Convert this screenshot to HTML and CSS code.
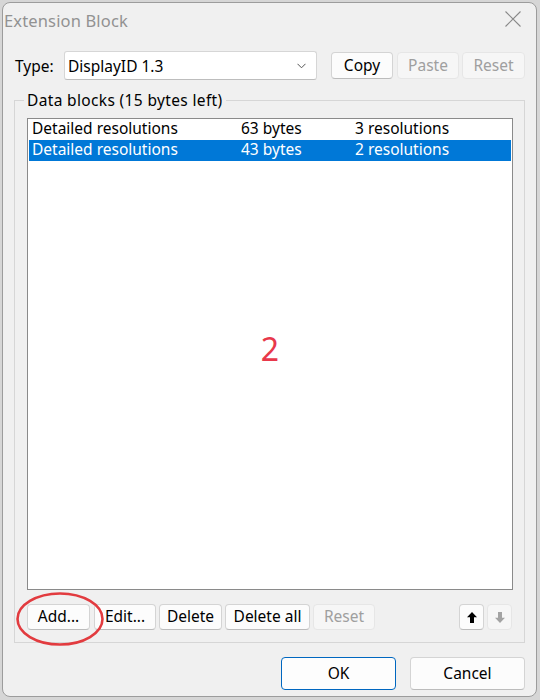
FILE: index.html
```html
<!DOCTYPE html>
<html lang="en">
<head>
<meta charset="utf-8">
<title>Extension Block</title>
<link rel="stylesheet" href="styles.css">
</head>
<body>
<div class="dialog">
  <div class="titlebar">
    <span class="title">Extension Block</span>
    <svg class="close" width="16" height="16" viewBox="0 0 16 16" aria-hidden="true">
      <path d="M0.5 0.5 L15.5 15.5 M15.5 0.5 L0.5 15.5" stroke="#8a8a8a" stroke-width="1.1" fill="none"/>
    </svg>
  </div>
  <div class="body">
    <div class="type-row">
      <span class="type-label">Type:</span>
      <div class="combo">
        <span class="combo-text">DisplayID 1.3</span>
        <svg class="chevron" width="9" height="6" viewBox="0 0 9 6" aria-hidden="true">
          <path d="M0.5 0.8 L4.5 4.8 L8.5 0.8" stroke="#555" stroke-width="1" fill="none"/>
        </svg>
      </div>
      <button class="btn copy">Copy</button>
      <button class="btn paste disabled">Paste</button>
      <button class="btn reset-top disabled">Reset</button>
    </div>

    <fieldset class="group">
      <legend>Data blocks (15 bytes left)</legend>
      <div class="list">
        <div class="row"><span class="c1">Detailed resolutions</span><span class="c2">63 bytes</span><span class="c3">3 resolutions</span></div>
        <div class="row selected"><span class="c1">Detailed resolutions</span><span class="c2">43 bytes</span><span class="c3">2 resolutions</span></div>
        <div class="marker">2</div>
      </div>
      <div class="actions">
        <div class="add-wrap">
          <button class="btn add">Add...</button>
          <svg class="ring" width="88" height="54" viewBox="0 0 88 54" aria-hidden="true">
            <ellipse cx="44" cy="27" rx="42.5" ry="25.5" fill="none" stroke="#e23b3f" stroke-width="2.6"/>
          </svg>
        </div>
        <button class="btn edit">Edit...</button>
        <button class="btn del">Delete</button>
        <button class="btn delall">Delete all</button>
        <button class="btn reset-bottom disabled">Reset</button>
        <div class="arrows">
          <button class="btn arrow">
            <svg width="10" height="11" viewBox="0 0 10 11" aria-hidden="true"><path d="M5 0 L10 5.2 H7 V11 H3 V5.2 H0 Z" fill="#000"/></svg>
          </button>
          <button class="btn arrow disabled">
            <svg width="10" height="11" viewBox="0 0 10 11" aria-hidden="true"><path d="M5 11 L10 5.8 H7 V0 H3 V5.8 H0 Z" fill="#a3a3a3"/></svg>
          </button>
        </div>
      </div>
    </fieldset>

    <div class="footer">
      <button class="btn ok">OK</button>
      <button class="btn cancel">Cancel</button>
    </div>
  </div>
</div>
</body>
</html>
```

FILE: styles.css
```css
* { box-sizing: border-box; }

html, body {
  margin: 0;
  padding: 0;
}

body {
  background: #d6d6d6;
  font-family: "Noto Sans", "Open Sans", sans-serif;
  font-size: 15.5px;
  color: #000;
  padding: 2px 0 0 2px;
  width: 540px;
  height: 700px;
  overflow: hidden;
}

.dialog {
  width: 535px;
  height: 695px;
  background: #f0f0f0;
  border: 1px solid #9c9c9c;
  border-radius: 8px;
  overflow: hidden;
}

.titlebar {
  height: 34px;
  display: flex;
  align-items: center;
  justify-content: space-between;
  padding-left: 1px;
}

.title {
  font-size: 16.5px;
  color: #929292;
  letter-spacing: 0.15px;
}

.close {
  margin-right: 15px;
  margin-bottom: 3px;
}

.body {
  padding: 14px 11px 0 11px;
}

.type-row {
  display: flex;
  align-items: center;
  height: 29px;
}

.type-label {
  width: 50px;
  padding-left: 1px;
}

.combo {
  width: 253px;
  height: 29px;
  background: #fff;
  border: 1px solid #d6d6d6;
  border-bottom-color: #bdbdbd;
  border-radius: 3px;
  display: flex;
  align-items: center;
  justify-content: space-between;
  padding: 0 10px 0 3px;
}

.btn {
  font-family: inherit;
  font-size: 15.5px;
  color: #000;
  background: #fcfcfc;
  border: 1px solid #d4d4d4;
  border-bottom-color: #bcbcbc;
  border-radius: 4px;
  height: 26px;
  padding: 0;
  margin: 0;
  line-height: 1;
  display: flex;
  align-items: center;
  justify-content: center;
}

.btn.disabled {
  color: #9f9f9f;
  background: #f6f6f6;
  border-color: #e6e6e6;
}

.type-row .btn { height: 27px; }

.copy { width: 62px; margin-left: 14px; }
.paste { width: 62px; margin-left: 4px; }
.reset-top { width: 63px; margin-left: 3px; }

.group {
  margin: 10px 0 0 0;
  padding: 8px 11px 12px 12px;
  border: 1px solid #d6d6d6;
  min-width: 0;
}

.group legend {
  padding: 0 3px;
  margin-left: -3px;
  line-height: 20px;
  letter-spacing: 0.35px;
}

.list {
  position: relative;
  height: 472px;
  background: #fff;
  border: 1px solid #8a8a8a;
}

.row {
  display: flex;
  height: 21px;
  line-height: 19px;
  padding: 0 0 2px 3px;
  margin: 0 1px;
  white-space: nowrap;
}

.row.selected {
  background: #0078d7;
  color: #fff;
}

.c1 { width: 209px; }
.c2 { width: 114px; }

.marker {
  position: absolute;
  left: 0;
  right: 0;
  top: calc(50% - 5px);
  transform: translateY(-50%);
  text-align: center;
  font-size: 32px;
  color: #e8384b;
  line-height: 1;
}

.actions {
  display: flex;
  align-items: center;
  margin-top: 14px;
  height: 26px;
}

.add-wrap {
  position: relative;
}

.ring {
  position: absolute;
  left: -11px;
  top: -12px;
  pointer-events: none;
}

.add { width: 63px; }
.edit { width: 62px; margin-left: 4px; }
.del { width: 63px; margin-left: 3px; }
.delall { width: 85px; margin-left: 3px; }
.reset-bottom { width: 62px; margin-left: 3px; }

.arrows {
  margin-left: auto;
  margin-right: 1px;
  display: flex;
  gap: 3px;
}

.arrow {
  width: 25px;
  height: 26px;
}

.footer {
  display: flex;
  justify-content: flex-end;
  gap: 14px;
  margin-top: 14px;
}

.footer .btn {
  width: 115px;
  height: 33px;
}

.footer .ok {
  border: 1px solid #0067c0;
  background: #fdfdfd;
}
```
